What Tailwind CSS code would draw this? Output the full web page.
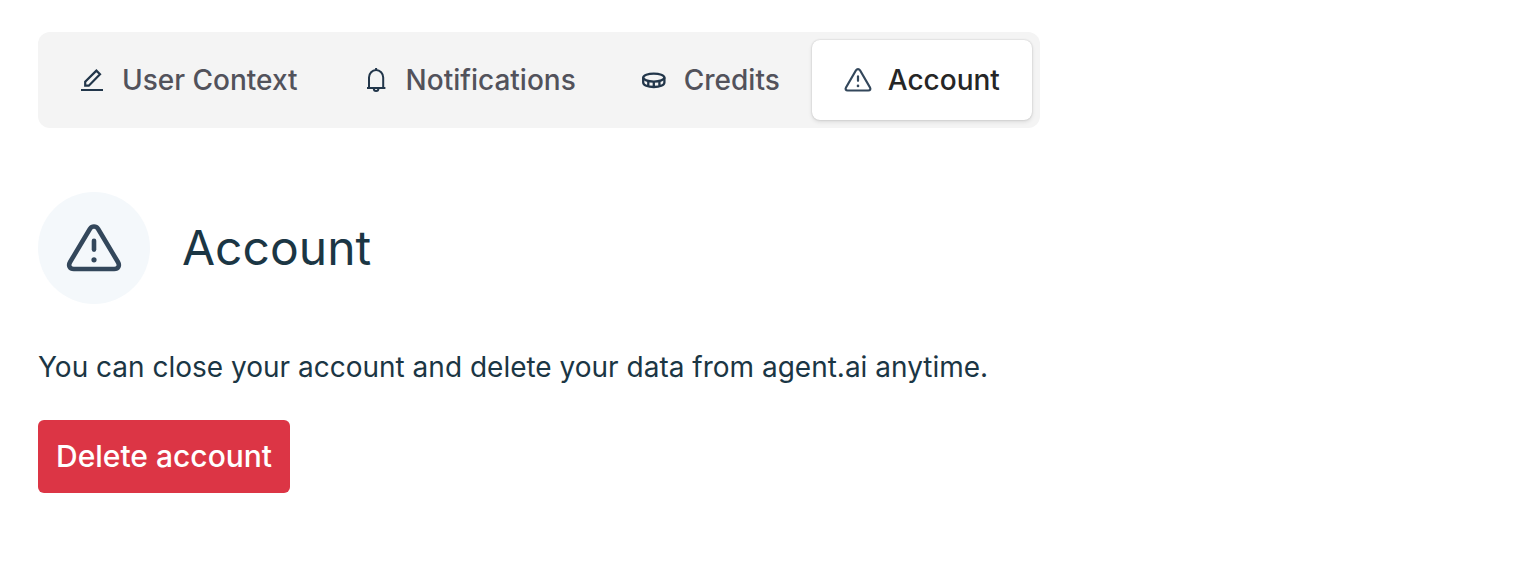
<!DOCTYPE html>
<html lang="en">
<head>
<meta charset="utf-8">
<meta name="viewport" content="width=device-width, initial-scale=1">
<title>Account</title>
<script src="https://cdn.jsdelivr.net/npm/@tailwindcss/browser@4"></script>
</head>
<body class="min-h-screen bg-white font-['Inter',sans-serif] text-[#1b3644]">
<main class="flex flex-col items-start px-[38px] py-8">
  <nav role="tablist" aria-label="Settings" class="flex rounded-xl bg-[#f4f4f4] p-2 text-[28px] leading-10 font-medium text-[#52525b]">
    <button role="tab" aria-selected="false" class="flex items-center gap-4 rounded-lg px-8 py-5">
      <svg class="size-7" viewBox="0 0 28 28" fill="none" stroke="#22364a" stroke-width="2.2" aria-hidden="true"><path d="M3 24H25" stroke-width="2"/><path d="M7.2 19.7V15.8L18.4 4.6L22 8.2L10.8 19.7Z"/></svg>
      User Context
    </button>
    <button role="tab" aria-selected="false" class="flex items-center gap-4 rounded-lg px-8 py-5">
      <svg class="size-7" viewBox="0 0 28 28" fill="none" stroke="#22364a" stroke-width="2" aria-hidden="true"><path d="M5 22H23.4"/><path d="M7 22V11.5a7.1 7.5 0 0 1 14.2 0V22M14.1 2V4.5"/><path d="M11.8 22.5a2.3 2.6 0 0 0 4.6 0"/></svg>
      Notifications
    </button>
    <button role="tab" aria-selected="false" class="flex items-center gap-4 rounded-lg px-8 py-5">
      <svg class="size-7" viewBox="0 0 28 28" fill="none" stroke="#22364a" stroke-width="2.3" aria-hidden="true"><ellipse cx="13.8" cy="11.6" rx="10.6" ry="4"/><path d="M3.2 11.6V16.5C3.2 19.2 7.8 21 13.8 21S24.4 19.2 24.4 16.5V11.6M8.3 15V20M13.8 16V21M19.4 15V20"/></svg>
      Credits
    </button>
    <button role="tab" aria-selected="true" class="flex items-center gap-4 rounded-lg bg-white px-8 py-5 text-[#262626] shadow-[0_0_2px_rgba(0,0,0,0.2),0_2px_4px_rgba(0,0,0,0.1)]">
      <svg class="size-7" viewBox="0 0 56 56" fill="none" stroke="#33475b" stroke-width="4.4" stroke-linejoin="round" stroke-linecap="round" aria-hidden="true"><path d="M24 8.5L4 43C2.2 46.2 3.8 49 7.2 49H48.8C52.2 49 53.8 46.2 52 43L32 8.5C30 5.5 26 5.5 24 8.5Z"/><path d="M28 20.8V29.6"/><circle cx="28" cy="39.8" r="2.6" fill="#33475b" stroke="none"/></svg>
      Account
    </button>
  </nav>

  <section class="mt-16 flex flex-col items-start">
    <header class="flex items-center gap-8">
      <span class="flex size-28 items-center justify-center rounded-full bg-[#f4f8fb]">
        <svg class="size-14" viewBox="0 0 56 56" fill="none" stroke="#33475b" stroke-width="4.6" stroke-linejoin="round" stroke-linecap="round" aria-hidden="true"><path d="M24 8.8L4.1 42C1.9 45.8 3.8 49 7.8 49H48.2C52.2 49 54.1 45.8 51.9 42L32 8.8C30 5.8 26 5.8 24 8.8Z"/><path d="M28 20.8V29.6"/><circle cx="28" cy="39.8" r="2.6" fill="#33475b" stroke="none"/></svg>
      </span>
      <h1 class="text-5xl">Account</h1>
    </header>
    <p class="mt-[42px] text-[28px] leading-[42px]">You can close your account and delete your data from agent.ai anytime.</p>
    <button class="mt-8 rounded-md bg-[#dc3545] px-[18px] py-4 text-[30px] leading-[41px] font-medium text-white">Delete account</button>
  </section>
</main>
</body>
</html>
